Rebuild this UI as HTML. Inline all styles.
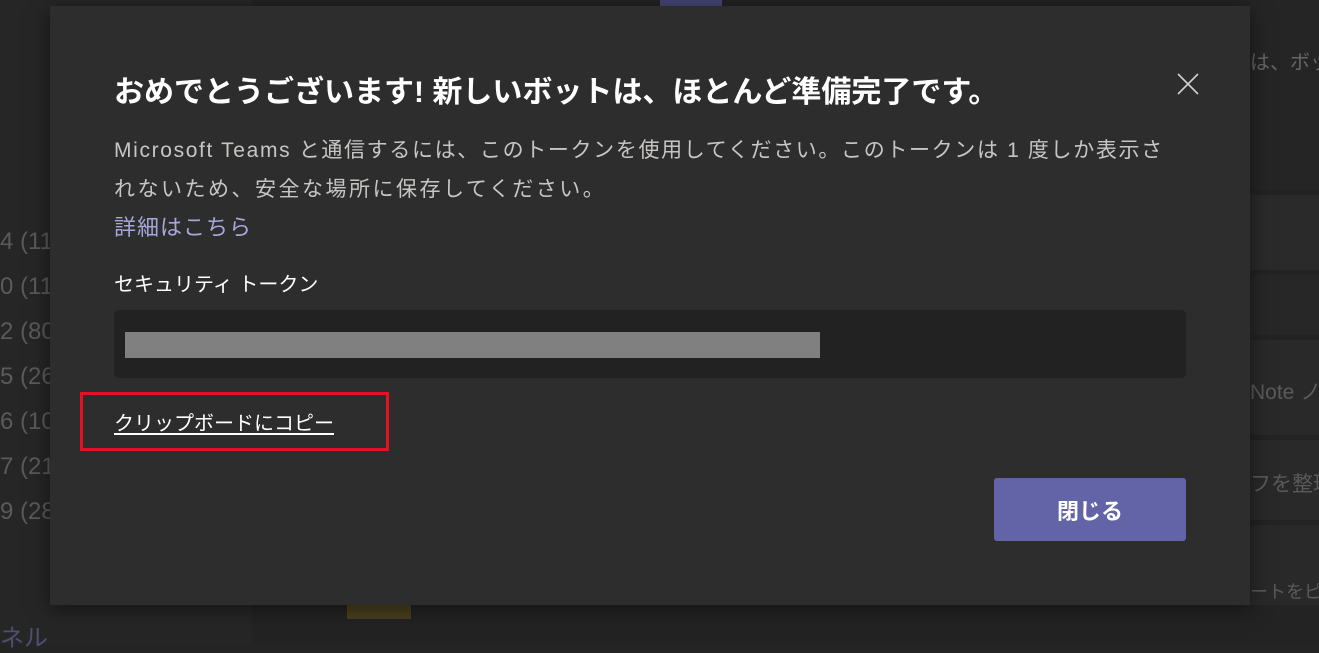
<!DOCTYPE html>
<html><head><meta charset="utf-8"><style>
*{margin:0;padding:0;box-sizing:border-box}
body{width:1319px;height:644px;overflow:hidden;background:#242424;position:relative;font-family:"Liberation Sans","Noto Sans CJK JP",sans-serif}
.a{position:absolute}
.bgt{color:#5a5a5a;font-size:24px;white-space:nowrap}
#dlg{left:50px;top:6px;width:1200px;height:599px;background:#2d2d2d;box-shadow:0 4px 20px rgba(0,0,0,.5)}
</style></head><body>
<div class="a" style="left:0;top:0;width:252px;height:644px;background:#262626"></div>
<div class="a" style="left:252px;top:0;width:1067px;height:644px;background:#232323"></div>
<div class="a" style="left:660px;top:0;width:62px;height:6px;background:#464775"></div>
<div class="a" style="left:1250px;top:0;width:69px;height:190px;background:#252525"></div>
<div class="a" style="left:1250px;top:195px;width:69px;height:75px;background:#2a2a2a"></div>
<div class="a" style="left:1250px;top:275px;width:69px;height:60px;background:#272727"></div>
<div class="a" style="left:1250px;top:340px;width:69px;height:95px;background:#292929"></div>
<div class="a" style="left:1250px;top:440px;width:69px;height:80px;background:#292929"></div>
<div class="a" style="left:1250px;top:525px;width:69px;height:80px;background:#292929"></div>
<div class="a" style="left:347px;top:605px;width:64px;height:14px;background:#4a401e"></div>
<div class="a bgt" style="left:1250px;top:46px;font-size:20px;color:#666">は、ボッ</div>
<div class="a bgt" style="left:1250px;top:376px;font-size:21px">Note ノ</div>
<div class="a bgt" style="left:1250px;top:468px;font-size:21px">フを整理</div>
<div class="a bgt" style="left:1250px;top:578px;font-size:18px">ートをピン</div>
<div class="a bgt" style="left:0;top:228px">4 (11</div>
<div class="a bgt" style="left:0;top:273px">0 (11</div>
<div class="a bgt" style="left:0;top:318px">2 (80</div>
<div class="a bgt" style="left:0;top:363px">5 (26</div>
<div class="a bgt" style="left:0;top:408px">6 (10</div>
<div class="a bgt" style="left:0;top:453px">7 (21</div>
<div class="a bgt" style="left:0;top:498px">9 (28</div>
<div class="a bgt" style="left:0;top:618px;color:#4e4e70">ネル</div>
<div id="dlg" class="a"></div>
<div class="a" style="left:114px;top:67px;font-size:30px;font-weight:bold;color:#fff;white-space:nowrap;letter-spacing:0px">おめでとうございます! 新しいボットは、ほとんど準備完了です。</div>
<svg class="a" style="left:1177px;top:73px" width="22" height="22" viewBox="0 0 22 22"><path d="M1 1L21 21M21 1L1 21" stroke="#d0d0d0" stroke-width="1.6"/></svg>
<div class="a" style="left:114px;top:131px;width:1120px;font-size:21px;letter-spacing:1.65px;line-height:39px;color:#c8c6c4;white-space:nowrap">Microsoft Teams と通信するには、このトークンを使用してください。このトークンは 1 度しか表示さ<br><span style="letter-spacing:2.5px">れないため、安全な場所に保存してください。</span></div>
<div class="a" style="left:114px;top:210px;font-size:22px;letter-spacing:1px;color:#a6a7dc">詳細はこちら</div>
<div class="a" style="left:114px;top:268px;font-size:20px;color:#fff">セキュリティ トークン</div>
<div class="a" style="left:114px;top:310px;width:1072px;height:68px;background:#222;border-radius:5px"></div>
<div class="a" style="left:125px;top:332px;width:695px;height:26px;background:#808080"></div>
<div class="a" style="left:80px;top:392px;width:309px;height:59px;border:3px solid #e81123"></div>
<div class="a" style="left:114px;top:407px;font-size:20px;color:#fff;text-decoration:underline;text-underline-offset:3px">クリップボードにコピー</div>
<div class="a" style="left:994px;top:478px;width:192px;height:63px;background:#6264a7;border-radius:3px;color:#fff;font-size:22px;font-weight:bold;display:flex;align-items:center;justify-content:center">閉じる</div>
</body></html>
